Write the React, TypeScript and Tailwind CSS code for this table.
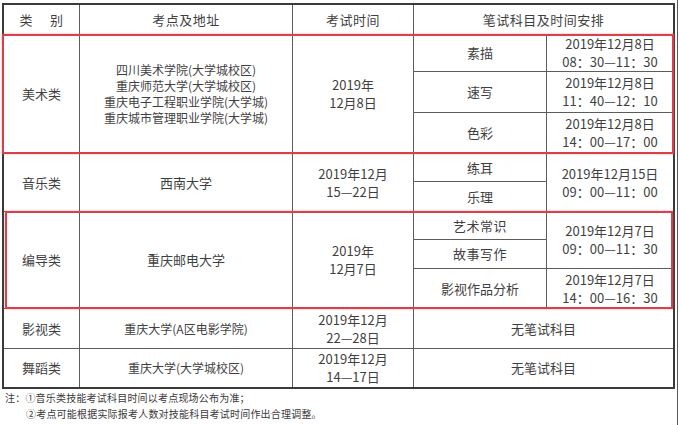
import type { ReactNode } from "react";

interface CellProps {
  children?: ReactNode;
  className?: string;
}

// one grid cell; borders are set by the caller
function Cell({ children, className = "" }: CellProps) {
  return (
    <div
      className={`flex flex-col items-center justify-center text-center border-[#5c5c5c] ${className}`}
    >
      {children}
    </div>
  );
}

const head = "border-r border-b text-[13px] tracking-[0.5px]";
const mid = "border-r border-b text-[13px]";
const last = "border-b text-[13px]";

function TwoLine({ a, b }: { a: string; b: string }) {
  return (
    <div className="leading-[18px]">
      <div>{a}</div>
      <div>{b}</div>
    </div>
  );
}

export default function App() {
  const artSchools = [
    "四川美术学院(大学城校区)",
    "重庆师范大学(大学城校区)",
    "重庆电子工程职业学院(大学城)",
    "重庆城市管理职业学院(大学城)",
  ];

  return (
    <div className="flex h-[425px] w-[680px] bg-white font-['Noto_Sans_CJK_SC',sans-serif] text-[#3f3f3f]">
      <div className="w-[677px] pl-[2px] pt-[3px]">
        <div className="relative w-[673px] border-2 border-[#3a3a3a]">
          <div className="grid grid-cols-[76px_213px_121px_133px_126px] grid-rows-[30px_37px_41px_41px_28px_30px_28px_29px_40px_40px_38px]">
            {/* header */}
            <Cell className={head}>
              <span>
                类<span className="ml-[17px]">别</span>
              </span>
            </Cell>
            <Cell className={head}>考点及地址</Cell>
            <Cell className={head}>考试时间</Cell>
            <Cell className="col-span-2 border-b text-[13px] tracking-[0.5px]">笔试科目及时间安排</Cell>

            {/* 美术类 */}
            <Cell className={`row-span-3 ${mid}`}>美术类</Cell>
            <Cell className="row-span-3 border-r border-b text-[12px] leading-[16px]">
              {artSchools.map((s) => (
                <div key={s}>{s}</div>
              ))}
            </Cell>
            <Cell className={`row-span-3 ${mid}`}>
              <TwoLine a="2019年" b="12月8日" />
            </Cell>
            <Cell className={mid}>素描</Cell>
            <Cell className={last}>
              <TwoLine a="2019年12月8日" b="08：30—11：30" />
            </Cell>
            <Cell className={mid}>速写</Cell>
            <Cell className={last}>
              <TwoLine a="2019年12月8日" b="11：40—12：10" />
            </Cell>
            <Cell className={mid}>色彩</Cell>
            <Cell className={last}>
              <TwoLine a="2019年12月8日" b="14：00—17：00" />
            </Cell>

            {/* 音乐类 */}
            <Cell className={`row-span-2 ${mid}`}>音乐类</Cell>
            <Cell className={`row-span-2 ${mid}`}>西南大学</Cell>
            <Cell className={`row-span-2 ${mid}`}>
              <TwoLine a="2019年12月" b="15—22日" />
            </Cell>
            <Cell className={mid}>练耳</Cell>
            <Cell className={`row-span-2 ${last}`}>
              <TwoLine a="2019年12月15日" b="09：00—11：00" />
            </Cell>
            <Cell className={mid}>乐理</Cell>

            {/* 编导类 */}
            <Cell className={`row-span-3 ${mid}`}>编导类</Cell>
            <Cell className={`row-span-3 ${mid}`}>重庆邮电大学</Cell>
            <Cell className={`row-span-3 ${mid}`}>
              <TwoLine a="2019年" b="12月7日" />
            </Cell>
            <Cell className={`${mid} tracking-[0.5px]`}>艺术常识</Cell>
            <Cell className={`row-span-2 ${last}`}>
              <TwoLine a="2019年12月7日" b="09：00—11：30" />
            </Cell>
            <Cell className={`${mid} tracking-[0.5px]`}>故事写作</Cell>
            <Cell className={mid}>影视作品分析</Cell>
            <Cell className={last}>
              <TwoLine a="2019年12月7日" b="14：00—16：30" />
            </Cell>

            {/* 影视类 */}
            <Cell className={mid}>影视类</Cell>
            <Cell className="border-r border-b text-[12px]">重庆大学(A区电影学院)</Cell>
            <Cell className={mid}>
              <TwoLine a="2019年12月" b="22—28日" />
            </Cell>
            <Cell className={`col-span-2 ${last}`}>无笔试科目</Cell>

            {/* 舞蹈类 */}
            <Cell className="border-r text-[13px]">舞蹈类</Cell>
            <Cell className="border-r text-[12px]">重庆大学(大学城校区)</Cell>
            <Cell className="border-r text-[13px]">
              <TwoLine a="2019年12月" b="14—17日" />
            </Cell>
            <Cell className="col-span-2 text-[13px]">无笔试科目</Cell>
          </div>

          {/* red annotation boxes drawn over the table */}
          <div className="pointer-events-none absolute left-[-2px] top-[29px] h-[120px] w-[672px] border-2 border-[#d8404c] shadow-[0_0_2px_rgba(230,90,100,0.6)]" />
          <div className="pointer-events-none absolute left-[1px] top-[206px] h-[98px] w-[668px] border-2 border-[#d8404c] shadow-[0_0_2px_rgba(230,90,100,0.6)]" />
        </div>

        <div className="mt-[1px] text-[10px] leading-[16px] tracking-[0.2px] text-[#3a3a3a]">
          <div className="pl-[3px]">注：①音乐类技能考试科目时间以考点现场公布为准；</div>
          <div className="pl-[24px]">②考点可能根据实际报考人数对技能科目考试时间作出合理调整。</div>
        </div>
      </div>
      <div className="h-full w-px bg-[#5a5a5a]" />
    </div>
  );
}
